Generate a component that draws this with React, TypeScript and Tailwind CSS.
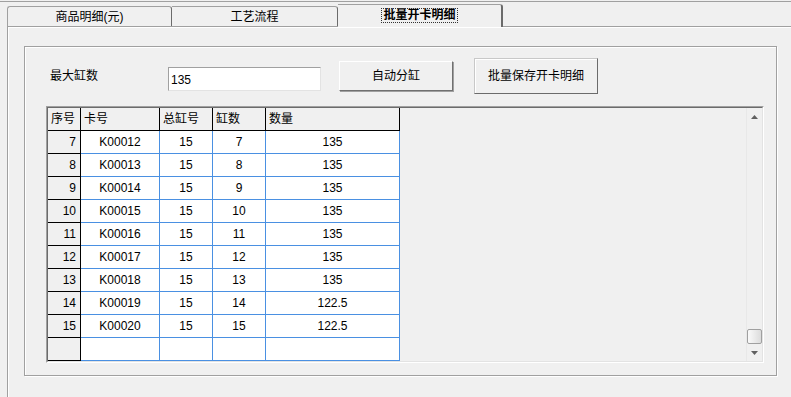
import React from "react";

const rows = [
  [7, "K00012", 15, 7, "135"],
  [8, "K00013", 15, 8, "135"],
  [9, "K00014", 15, 9, "135"],
  [10, "K00015", 15, 10, "135"],
  [11, "K00016", 15, 11, "135"],
  [12, "K00017", 15, 12, "135"],
  [13, "K00018", 15, 13, "135"],
  [14, "K00019", 15, 14, "122.5"],
  [15, "K00020", 15, 15, "122.5"],
];

const font = { fontFamily: '"Liberation Sans", "Noto Sans CJK SC", sans-serif' };

function HeadCell({ w, children }: { w: string; children?: React.ReactNode }) {
  return (
    <div className={`${w} h-[23px] shrink-0 border-r border-b border-black bg-[#f0f0f0] pl-[3px] flex items-center text-[12px] text-black`}>
      {children}
    </div>
  );
}

function DataCell({ w, children }: { w: string; children?: React.ReactNode }) {
  return (
    <div className={`${w} h-[23px] shrink-0 border-r border-b border-[#4a90e2] bg-white flex items-center justify-center text-[12px] text-black`}>
      {children}
    </div>
  );
}

function RowHead({ children }: { children?: React.ReactNode }) {
  return (
    <div className="w-[33px] h-[23px] shrink-0 border-r border-b border-black bg-[#f0f0f0] pr-[4px] flex items-center justify-end text-[12px] text-black">
      {children}
    </div>
  );
}

export default function App() {
  return (
    <div className="w-[791px] h-[397px] overflow-hidden bg-[#f0f0f0] text-black" style={font}>
      <div className="mt-px h-px bg-[#a0a0a0]" />
      {/* tabs */}
      <div className="flex items-end pl-[7px] mt-[2px] h-[22px]">
        <div className="w-[165px] h-[20px] border-t border-l border-[#a0a0a0] border-r border-r-[#6b6b6b] rounded-tl-[3px] rounded-tr-[3px] flex items-center justify-center text-[12px]">
          商品明细(元)
        </div>
        <div className="w-[166px] h-[20px] border-t border-[#a0a0a0] border-r border-r-[#6b6b6b] rounded-tr-[3px] flex items-center justify-center text-[12px]">
          工艺流程
        </div>
        <div className="w-[165px] h-[23px] -mb-px relative z-10 bg-[#f0f0f0] border-t border-[#a0a0a0] border-r-2 border-r-[#6b6b6b] rounded-tr-[3px] flex items-center justify-center text-[12px] pb-px">
          <span className="font-bold outline-1 outline-dotted outline-[#333] px-px leading-[13px]">批量开卡明细</span>
        </div>
        <div className="flex-1" />
      </div>
      {/* panel */}
      <div className="ml-[7px] border-t border-l border-[#a0a0a0] h-[400px]">
        <div className="border-t border-l border-white h-full pt-[18px] pl-[15px]">
          {/* group box */}
          <div className="w-[753px] h-[330px] border border-[#a0a0a0] shadow-[inset_1px_1px_0_#fff,1px_1px_0_#fff]">
            <div className="flex items-center pl-[25px] pt-[11px]">
              <div className="w-[118px] text-[12px]">最大缸数</div>
              <div className="mt-[6px] w-[153px] h-[24px] border border-[#a0a0a0] border-b-[#e3e3e3] border-r-[#e3e3e3] bg-white pl-[2px] flex items-start pt-[3px] text-[12px]">
                135
              </div>
              <div className="ml-[18px] w-[114px] h-[30px] border border-white border-r-[#707070] border-b-[#707070] shadow-[1px_1px_0_#a0a0a0] bg-[#f0f0f0] flex items-center justify-center text-[12px]">
                自动分缸
              </div>
              <div className="ml-[21px] w-[124px] h-[36px] border border-[#c8c8c8] border-r-[#6b6b6b] border-b-[#6b6b6b] shadow-[inset_1px_1px_0_#fff] bg-[#f0f0f0] flex items-center justify-center text-[12px]">
                批量保存开卡明细
              </div>
            </div>
            {/* grid */}
            <div className="mt-[12px] ml-[21px] w-[718px] h-[257px] border border-[#a0a0a0] border-r-white border-b-white">
              <div className="h-full border border-[#6b6b6b] border-r-[#e3e3e3] border-b-[#e3e3e3] flex">
                <div className="w-[352px] flex flex-col">
                  <div className="flex">
                    <HeadCell w="w-[33px]">序号</HeadCell>
                    <HeadCell w="w-[79px]">卡号</HeadCell>
                    <HeadCell w="w-[53px]">总缸号</HeadCell>
                    <HeadCell w="w-[53px]">缸数</HeadCell>
                    <HeadCell w="w-[134px]">数量</HeadCell>
                  </div>
                  {rows.map((r) => (
                    <div className="flex" key={String(r[0])}>
                      <RowHead>{r[0]}</RowHead>
                      <DataCell w="w-[79px]">{r[1]}</DataCell>
                      <DataCell w="w-[53px]">{r[2]}</DataCell>
                      <DataCell w="w-[53px]">{r[3]}</DataCell>
                      <DataCell w="w-[134px]">{r[4]}</DataCell>
                    </div>
                  ))}
                  <div className="flex">
                    <RowHead />
                    <DataCell w="w-[79px]" />
                    <DataCell w="w-[53px]" />
                    <DataCell w="w-[53px]" />
                    <DataCell w="w-[134px]" />
                  </div>
                </div>
                <div className="flex-1" />
                {/* scrollbar */}
                <div className="w-[16px] border-l border-[#e8e8e8] bg-[#f0f0f0] flex flex-col items-center">
                  <div className="h-[17px] w-full flex items-center justify-center">
                    <svg width="7" height="4" viewBox="0 0 7 4">
                      <path d="M3.5 0 L7 4 L0 4 Z" fill="#606060" />
                    </svg>
                  </div>
                  <div className="flex-1" />
                  <div className="w-[15px] h-[15px] border border-[#a0a0a0] rounded-[2px] bg-gradient-to-r from-[#fafafa] to-[#dcdcdc]" />
                  <div className="h-[17px] w-full flex items-center justify-center">
                    <svg width="7" height="4" viewBox="0 0 7 4">
                      <path d="M0 0 L7 0 L3.5 4 Z" fill="#606060" />
                    </svg>
                  </div>
                </div>
              </div>
            </div>
          </div>
        </div>
      </div>
    </div>
  );
}
